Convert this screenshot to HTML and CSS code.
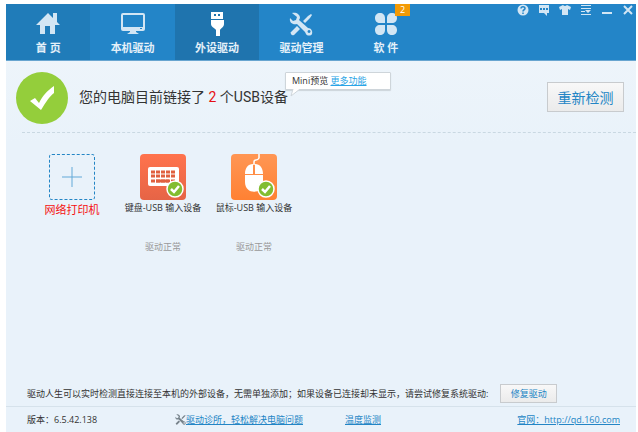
FILE: index.html
```
<!DOCTYPE html>
<html lang="zh-CN">
<head>
    <meta charset="utf-8">
    <title>外设驱动</title>
    <link rel="stylesheet" href="styles.css">
</head>
<body>
    <div class="window">

        <!-- Header -->
        <header class="header">
            <nav class="tabs">
                <a class="tab home" href="#home">
                    <svg width="24" height="24" viewBox="0 0 24 24"><path d="M12 1L0 13h4v9h5v-8h5v8h5v-9h5l-3-3V1h-4v5z"/></svg>
                    <span>首 页</span>
                </a>
                <a class="tab" href="#local">
                    <svg width="24" height="24" viewBox="0 0 24 24"><path fill-rule="evenodd" d="M2 1h20q2 0 2 2v14q0 2-2 2h-7v1l3 2H6l3-2v-1H2q-2 0-2-2V3q0-2 2-2zm0 2v12h20V3zm17 13v1h2v-1z"/></svg>
                    <span>本机驱动</span>
                </a>
                <a class="tab active" href="#usb">
                    <svg width="24" height="24" viewBox="0 0 24 24"><path fill-rule="evenodd" d="M6 0h12v7H6zm3 2v2h2V2zm4 0v2h2V2zM6 8h13v4c0 3-3 4-4 6v6h-4v-6c-1-2-5-3-5-6z"/></svg>
                    <span>外设驱动</span>
                </a>
                <a class="tab" href="#manage">
                    <svg width="24" height="24" viewBox="0 0 24 24"><use href="#tools"/></svg>
                    <span>驱动管理</span>
                </a>
                <a class="tab" href="#soft">
                    <svg width="24" height="24" viewBox="0 0 24 24"><path d="M6 1c3 0 5 2 5 5v5H6C3 11 1 9 1 6s2-5 5-5zM18 1c3 0 5 2 5 5s-2 5-5 5h-5V6c0-3 2-5 5-5zM6 13h5v5c0 3-2 5-5 5s-5-2-5-5 2-5 5-5zM13 13h5c3 0 5 2 5 5s-2 5-5 5-5-2-5-5z"/></svg>
                    <span>软 件</span>
                    <b class="badge">2</b>
                </a>
            </nav>
            <div class="controls">
                <button type="button" aria-label="帮助"><svg width="12" height="12" viewBox="0 0 12 12"><circle cx="6" cy="6" r="5.5"/><path class="cut" d="M4 4.500C4 2 8 2 8 4.500 8 6 6 5.500 6 7.500M6 8.500V10"/></svg></button>
                <button type="button" aria-label="反馈"><svg width="12" height="12" viewBox="0 0 12 12"><path fill-rule="evenodd" d="M1 1h10v8H9v3L6 9H1zm1 3v2h2V4zm3 0v2h2V4zm3 0v2h2V4z"/></svg></button>
                <button type="button" aria-label="换肤"><svg width="12" height="12" viewBox="0 0 12 12"><path d="M4 1q2 2 4 0l4 2-1 3-2-1v6H3V5L1 6 0 3z"/></svg></button>
                <button type="button" aria-label="菜单"><svg width="12" height="12" viewBox="0 0 12 12"><path d="M1 1h10v1H1zM1 4h10v1H1zM1 7h4v1H1zM1 10h10v1H1zM5 6h6L8 9z"/></svg></button>
                <button type="button" aria-label="最小化"><svg width="12" height="12" viewBox="0 0 12 12"><path d="M1 8h10v2H1z"/></svg></button>
                <button type="button" aria-label="关闭"><svg width="12" height="12" viewBox="0 0 12 12"><path class="line" d="M2 2l8 8M10 2l-8 8"/></svg></button>
            </div>
        </header>

        <!-- Status -->
        <section class="status">
            <svg class="ok" width="54" height="54" viewBox="0 0 54 54"><circle cx="27" cy="27" r="26"/><path d="M15 30l5-3 4 5c4-8 8-12 15-17v7c-5 4-8 9-13 17z"/></svg>
            <h1>您的电脑目前链接了 <em>2</em> 个USB设备</h1>
            <div class="tip">Mini预览 <a href="#more">更多功能</a>
                <svg width="12" height="8" viewBox="0 0 12 8"><path d="M3 0L1 7l9-7"/></svg>
            </div>
            <button class="button retest" type="button">重新检测</button>
        </section>

        <!-- Devices -->
        <main class="devices">
            <div class="device">
                <button class="add" type="button" aria-label="添加网络打印机"><svg width="20" height="20" viewBox="0 0 20 20"><path d="M0 10h20M10 0v20"/></svg></button>
                <p class="printer">网络打印机</p>
            </div>
            <div class="device">
                <svg width="46" height="46" viewBox="0 0 46 46">
                    <defs>
                        <linearGradient id="red" x2="0" y2="1"><stop stop-color="#ff734d"/><stop offset="1" stop-color="#e66446"/></linearGradient>
                        <linearGradient id="orange" x2="0" y2="1"><stop stop-color="#ff9654"/><stop offset="1" stop-color="#ff8133"/></linearGradient>
                        <g id="done"><circle cx="35" cy="35" r="8" fill="#82bd31" stroke="#fff" stroke-width="1.500"/><path d="M31 35l3 3 5-6" fill="none" stroke="#fff" stroke-width="2.500"/></g>
                        <g id="tools"><path fill-rule="evenodd" d="M3 1c4-1 8 1 8 5l-1 2 9 8c3 0 5 3 4 6-1 2-5 2-6 0l-1-2-8-8c-4 1-8-1-7-6l3 3 3-1 1-3zM20 18a1.500 1.500 0 1 0 .1 0z"/><path d="M14 9l5-5 3-2 1 1-2 3-5 5zM8 14l3 3-6 6q-2 1-3-1t0-2z"/></g>
                    </defs>
                    <rect width="46" height="46" rx="4" fill="url(#red)"/>
                    <rect x="8" y="13" width="31" height="19" rx="2" fill="#fff"/>
                    <path d="M11 18h24M11 22h24M11 27h24" stroke="#e0603f" stroke-width="3" stroke-dasharray="4 1"/>
                    <path d="M16 27h13" stroke="#e0603f" stroke-width="3"/>
                    <use href="#done"/>
                </svg>
                <p>键盘-USB 输入设备</p>
                <small>驱动正常</small>
            </div>
            <div class="device">
                <svg width="46" height="46" viewBox="0 0 46 46">
                    <rect width="46" height="46" rx="4" fill="url(#orange)"/>
                    <path d="M23 11V8q0-2 2-2t3-2V0" fill="none" stroke="#fff" stroke-width="1.500"/>
                    <path d="M22 10v10h-8c0-6 3-10 8-10zM24 10c5 0 8 4 8 10h-8zM14 21h18v7c0 13-18 13-18 0z" fill="#fff"/>
                    <use href="#done"/>
                </svg>
                <p>鼠标-USB 输入设备</p>
                <small>驱动正常</small>
            </div>
        </main>

        <div class="notice">
            <span>驱动人生可以实时检测直接连接至本机的外部设备，无需单独添加；如果设备已连接却未显示，请尝试修复系统驱动:</span>
            <button class="button" type="button">修复驱动</button>
        </div>

        <footer class="footer">
            <span class="version">版本：6.5.42.138</span>
            <span class="clinic"><svg width="11" height="11" viewBox="0 0 24 24"><use href="#tools"/></svg><a href="#clinic">驱动诊所，轻松解决电脑问题</a></span>
            <a href="#temp">温度监测</a>
            <a class="site" href="#site">官网：http://qd.160.com</a>
        </footer>
    </div>
</body>
</html>
```
FILE: styles.css
```
* {
    box-sizing: border-box;
}

body {
    margin: 0;
    padding: 4px 2px 0 6px;
    background: #fff;
    color: #333;
    font: 9px/14px "Open Sans", "Noto Sans CJK SC", sans-serif;
}

h1, p {
    margin: 0;
    font-weight: normal;
}

button {
    padding: 0;
    border: 0;
    background: none;
    font-family: inherit;
}

a {
    color: #2385c5;
}

.window {
    display: flex;
    flex-direction: column;
    min-height: calc(100vh - 4px);
    background: linear-gradient(#f0f6fb, #e9f2fa 140px);
}

/* Header */

.header {
    display: flex;
    justify-content: space-between;
    height: 57px;
    border-bottom: 1px solid #68a5d0;
    background: #2385c8;
}

.tabs {
    display: flex;
    width: 67%;
}

.tab {
    position: relative;
    display: flex;
    flex: 1;
    flex-direction: column;
    align-items: center;
    gap: 5px;
    padding-top: 8px;
    color: #e4f0f9;
    fill: #d3e6f4;
    font-size: 11px;
    font-weight: bold;
    text-decoration: none;
}

.tab.home {
    background: #207cb9;
}

.tab.active {
    background: #1f74ae;
    fill: #fff;
}

.badge {
    position: absolute;
    top: 0;
    right: 18px;
    width: 15px;
    background: #f39a05;
    color: #fff;
    font-size: 9px;
    font-weight: normal;
    line-height: 12px;
    text-align: center;
}

.controls {
    display: flex;
    gap: 9px;
    padding: 0 2px;
}

.controls button {
    height: 12px;
}

.controls svg {
    display: block;
    fill: #d3e6f4;
}

.controls .cut,
.controls .line {
    fill: none;
    stroke: #2385c8;
    stroke-width: 1.5;
}

.controls .line {
    stroke: #d3e6f4;
    stroke-width: 2;
}

/* Status */

.status {
    position: relative;
    display: flex;
    align-items: center;
    margin-left: 16px;
    padding-right: 12px;
    height: 72px;
    border-bottom: 1px dashed #c9d8e2;
}

.ok {
    margin: 2px 10px 0 -7px;
    fill: #94ce3b;
}

.ok path {
    fill: #fff;
}

h1 {
    font-family: Roboto, "Noto Sans CJK SC", sans-serif;
    font-size: 14px;
    line-height: 20px;
}

h1 em {
    color: #e60f14;
    font-style: normal;
}

.tip {
    position: absolute;
    top: 11px;
    left: 263px;
    width: 106px;
    padding: 1px 6px;
    border: 1px solid #ced5da;
    border-radius: 1px;
    background: #fff;
    box-shadow: 0 1px 1px #ccd4da;
}

.tip a {
    color: #2aa5e6;
}

.tip svg {
    position: absolute;
    top: 16px;
    left: 4px;
    fill: #fff;
    stroke: #ced5da;
}

.button {
    border: 1px solid #c8cbce;
    background: linear-gradient(#f8f8f8, #ebebeb);
    color: #2385c5;
    font-size: 9px;
}

.retest {
    width: 77px;
    height: 30px;
    margin-left: auto;
    font-size: 14px;
}

/* Devices */

.devices {
    display: flex;
    flex: 1;
    gap: 7px;
    padding: 21px 24px;
}

.device {
    display: flex;
    flex-direction: column;
    align-items: center;
    width: 84px;
    white-space: nowrap;
}

.device p {
    margin-top: 1px;
}

.device .printer {
    margin-top: 3px;
    color: #f50f0f;
    font-size: 11px;
}

.device small {
    margin-top: 25px;
    color: #999;
    font-size: 9px;
}

.add {
    display: grid;
    place-items: center;
    width: 46px;
    height: 46px;
    border: 1px dashed #2385c5;
    border-radius: 3px;
}

.add path {
    stroke: #62a9d8;
}

/* Bottom */

.notice {
    display: flex;
    align-items: center;
    gap: 12px;
    padding: 0 21px 3px;
}

.notice .button {
    width: 57px;
    height: 19px;
}

.footer {
    display: flex;
    align-items: center;
    height: 26px;
    padding: 0 16px 0 21px;
    border-top: 1px solid #d6e2eb;
}

.version {
    width: 148px;
}

.clinic {
    display: flex;
    align-items: center;
    width: 170px;
    fill: #77838b;
}

.site {
    margin-left: auto;
}
```
